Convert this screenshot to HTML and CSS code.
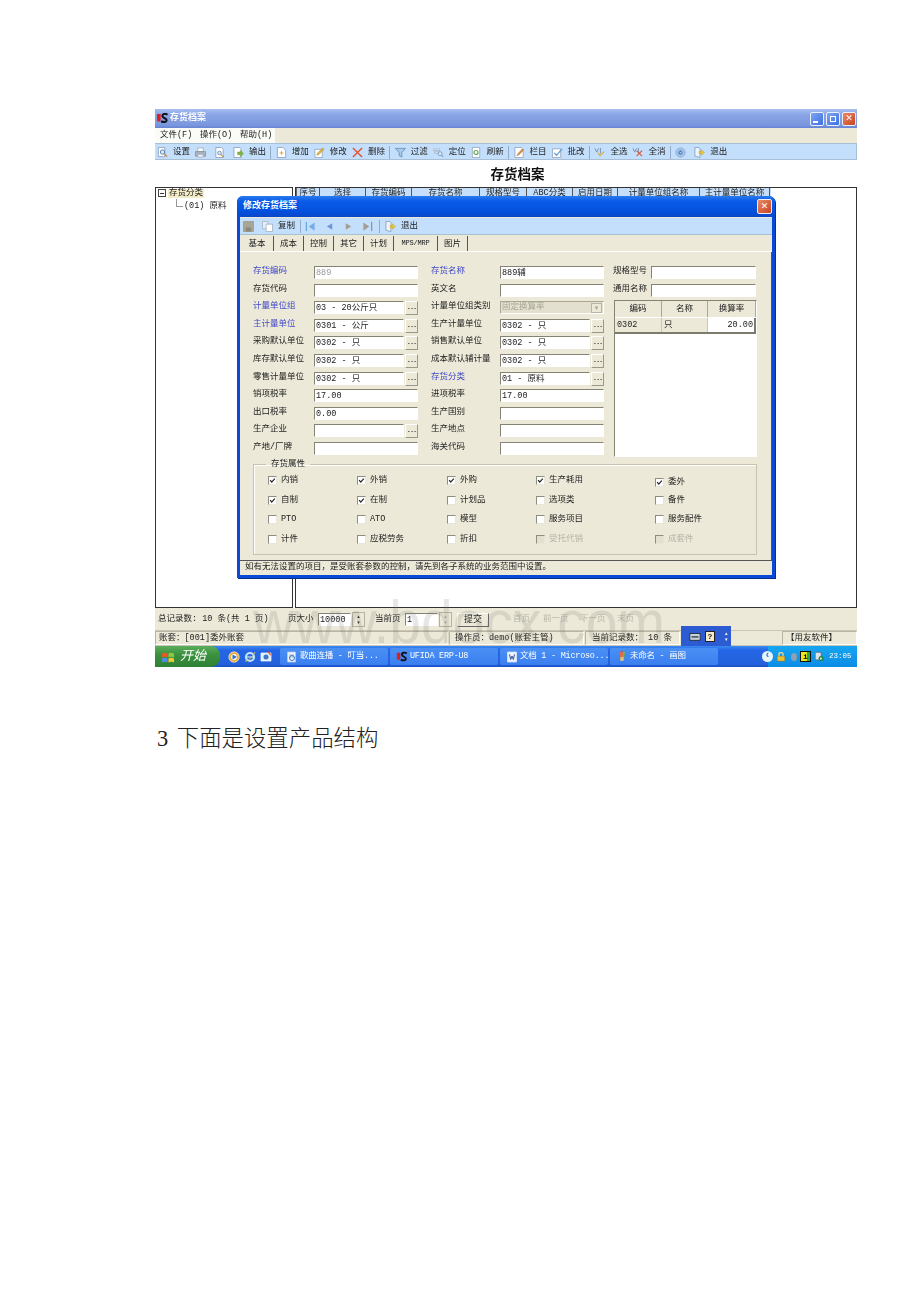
FILE: index.html
```html
<!DOCTYPE html>
<html lang="zh">
<head>
<meta charset="utf-8">
<title>存货档案</title>
<link rel="stylesheet" href="styles.css">
</head>
<body>
<svg class="defs" width="0" height="0">
  <symbol id="i-zoom" viewBox="0 0 12 12"><path d="M1.500.5h7v10h-7z" fill="#fff" stroke="#7d93b2" stroke-width=".8"/><circle cx="6" cy="5.500" r="2.400" fill="#cfe6fb" stroke="#5a7fa8"/><path d="M8 7.500l3 3" stroke="#c58a3a" stroke-width="1.400"/></symbol>
  <symbol id="i-print" viewBox="0 0 12 12"><path d="M3 1h6v4H3z" fill="#fff" stroke="#8a96a5" stroke-width=".7"/><path d="M.5 5h11v5H.5z" fill="#a9b4bf" stroke="#7a8692" stroke-width=".7"/><path d="M3 8h6v3H3z" fill="#eef2f6" stroke="#8a96a5" stroke-width=".6"/></symbol>
  <symbol id="i-prev" viewBox="0 0 12 12"><path d="M2 .5h6l2 2v9H2z" fill="#fff" stroke="#7d93b2" stroke-width=".8"/><circle cx="6" cy="6.500" r="2" fill="#cfe6fb" stroke="#5a7fa8" stroke-width=".8"/><path d="M7.500 8l3 3" stroke="#c58a3a" stroke-width="1.200"/></symbol>
  <symbol id="i-out" viewBox="0 0 12 12"><path d="M1 .5h6l2 2v9H1z" fill="#fff" stroke="#7d93b2" stroke-width=".8"/><path d="M5 5.500h3V3.500L11.500 7 8 10.500V8.500H5z" fill="#7fb548" stroke="#5d8d30" stroke-width=".4"/></symbol>
  <symbol id="i-add" viewBox="0 0 12 12"><path d="M1.500.5h6l3 3v8h-9z" fill="#fff" stroke="#7d93b2" stroke-width=".8"/><path d="M6 4.500v4M4 6.500h4" stroke="#e0a030"/></symbol>
  <symbol id="i-edit" viewBox="0 0 12 12"><path d="M1 2.500h8v9H1z" fill="#fff" stroke="#8a9ab0" stroke-width=".8"/><path d="M3 9l1-2.500L9.500 1 11 2.500 5.500 8z" fill="#e8b63c" stroke="#9a7a2a" stroke-width=".5"/></symbol>
  <symbol id="i-del" viewBox="0 0 12 12"><path d="M1 1l10 10M11 1L1 11" stroke="#e2512c" stroke-width="1.500"/></symbol>
  <symbol id="i-filter" viewBox="0 0 12 12"><path d="M.5 1.500h11L7.500 6v5l-3-1.500V6z" fill="#a9c9ea" stroke="#5f86b0" stroke-width=".8"/></symbol>
  <symbol id="i-loc" viewBox="0 0 14 12"><path d="M.5 1.500h8v2h-8zM2 5h6v2H2z" fill="#dfe7ef" stroke="#8c9cad" stroke-width=".6"/><circle cx="9" cy="7.500" r="2.500" fill="#d7ecfb" stroke="#6b8fb0"/><path d="M11 9.500l2 2" stroke="#7a93aa" stroke-width="1.300"/></symbol>
  <symbol id="i-ref" viewBox="0 0 12 12"><path d="M1.500.5h8v11h-8z" fill="#fff" stroke="#8a9ab0" stroke-width=".8"/><circle cx="5.500" cy="6" r="2.200" fill="none" stroke="#58a34a" stroke-width="1.200"/></symbol>
  <symbol id="i-col" viewBox="0 0 12 12"><path d="M1 .5h7l2 2v9H1z" fill="#fff" stroke="#8a9ab0" stroke-width=".8"/><path d="M3 9.500l1-2 5-5.500 1.500 1.500-5 5z" fill="#dc8f3c" stroke="#a2642a" stroke-width=".4"/></symbol>
  <symbol id="i-batch" viewBox="0 0 12 12"><path d="M.5 2h9v9.500h-9z" fill="#fff" stroke="#8a9ab0" stroke-width=".8"/><path d="M2.500 6.500l2.500 2.500 6-7" fill="none" stroke="#5ea0d8" stroke-width="1.300"/></symbol>
  <symbol id="i-all" viewBox="0 0 12 12"><path d="M1 1.500l2 4 2-4M7 1v6" stroke="#6a87a6" fill="none" stroke-width=".9"/><path d="M4 6l2.500 3.500L11 5" fill="none" stroke="#d6a93c" stroke-width="1.200"/></symbol>
  <symbol id="i-none" viewBox="0 0 12 12"><path d="M1 1.500l2 4 2-4M7 1v6" stroke="#6a87a6" fill="none" stroke-width=".9"/><path d="M5 4l6 6M11 4l-6 6" stroke="#dc5a3a" stroke-width="1.300"/></symbol>
  <symbol id="i-help" viewBox="0 0 12 12"><circle cx="6" cy="6" r="5" fill="#a9c7e8" stroke="#7fa2c9" stroke-width=".8"/><circle cx="6" cy="6" r="2.400" fill="#4d7fc0"/><path d="M5 5l1.200 1.800L7.500 5" stroke="#fff" fill="none" stroke-width=".7"/></symbol>
  <symbol id="i-exit" viewBox="0 0 12 12"><path d="M1 .5h4.500l1 1v10l-5.500-1.500z" fill="#eef4fb" stroke="#7d93b2" stroke-width=".8"/><path d="M5.500 5h2.500V3l3.500 3L8 9V7H5.500z" fill="#eec63a" stroke="#b08f20" stroke-width=".4"/></symbol>
  <symbol id="i-save" viewBox="0 0 12 12"><path d="M.5.500h11v11H.5z" fill="#a9a594" stroke="#8f8b7a" stroke-width=".6"/><path d="M3 7h6v4.500H3z" fill="#8d8977"/></symbol>
  <symbol id="i-copy" viewBox="0 0 12 12"><path d="M.5.500h6v8h-6z" fill="#e6edf5" stroke="#9ba9b8" stroke-width=".7"/><path d="M4.500 3.500h7v8h-7z" fill="#fff" stroke="#8ea0b2" stroke-width=".7"/></symbol>
  <symbol id="i-first" viewBox="0 0 12 12"><path d="M1.500 1v10" stroke="#6aa7de" stroke-width="1.400"/><path d="M10.500 1.500L4 6l6.500 4.500z" fill="#77aee4"/></symbol>
  <symbol id="i-back" viewBox="0 0 12 12"><path d="M9 2.500L3 6l6 3.500z" fill="#6f96d6"/></symbol>
  <symbol id="i-next" viewBox="0 0 12 12"><path d="M3 2.500L9 6l-6 3.500z" fill="#a29f92"/></symbol>
  <symbol id="i-last" viewBox="0 0 12 12"><path d="M10.500 1v10" stroke="#9a978a" stroke-width="1.400"/><path d="M1.500 1.500L8 6l-6.500 4.500z" fill="#a29f92"/></symbol>
  <symbol id="i-us" viewBox="0 0 14 12"><path d="M1 1v6.500c0 2.500 4 2.500 4 0V1z" fill="#d8201c"/><path d="M12.500 2C10 0 6.500 1 7 3.500c.5 2.500 4.500 2 4.500 4.500 0 2-3 2.500-6 1" fill="none" stroke="#101018" stroke-width="2.200"/></symbol>
  <symbol id="i-check" viewBox="0 0 9 9"><path d="M1.500 4L3.500 6.500 7.500 2" fill="none" stroke="#222" stroke-width="1.600"/></symbol>
  <symbol id="i-flag" viewBox="0 0 14 14"><path d="M1 3.500C3 2.500 4.500 2.500 6.500 3.500v4C4.500 6.500 3 6.500 1 7.500z" fill="#e8582c"/><path d="M7.500 3.500c2-1 3.500-1 5.500 0v4c-2-1-3.500-1-5.500 0z" fill="#8fc83c"/><path d="M1 8.500C3 7.500 4.500 7.500 6.500 8.500v4C4.500 11.500 3 11.500 1 12.500z" fill="#4c8ee8"/><path d="M7.500 8.500c2-1 3.500-1 5.500 0v4c-2-1-3.500-1-5.500 0z" fill="#f4c832"/></symbol>
  <symbol id="i-media" viewBox="0 0 12 12"><circle cx="6" cy="6" r="5.200" fill="#f4a92c" stroke="#fff" stroke-width=".6"/><circle cx="6" cy="6" r="3" fill="#fff"/><path d="M4.500 3.500L9 6l-4.500 2.500z" fill="#2c6fc4"/></symbol>
  <symbol id="i-ie" viewBox="0 0 12 12"><circle cx="6" cy="6" r="4" fill="none" stroke="#bfe3fb" stroke-width="2.200"/><path d="M3 6h6" stroke="#bfe3fb" stroke-width="1.200"/><path d="M1 10C3 11 9 6 11 1" fill="none" stroke="#e8c858" stroke-width=".9"/></symbol>
  <symbol id="i-desk" viewBox="0 0 12 12"><path d="M1 2h10v8H1z" fill="#dfeefc" stroke="#fff" stroke-width=".7"/><circle cx="6" cy="6" r="2.500" fill="#3a78c8"/><path d="M8 1l3 3" stroke="#e05a30" stroke-width="1.200"/></symbol>
  <symbol id="i-word" viewBox="0 0 12 12"><path d="M1.500 1h9v10h-9z" fill="#e9f0fa" stroke="#dfe9f8" stroke-width=".7"/><path d="M3.500 3.500l1.200 5 1.300-3.500 1.300 3.500 1.200-5" fill="none" stroke="#34589c"/></symbol>
  <symbol id="i-paint" viewBox="0 0 12 12"><path d="M3 1l1.500 9h3L9 1z" fill="#d8c07a"/><path d="M4 .5v6M6 0v6" stroke="#d83a2c" stroke-width="1.200"/><path d="M8 .5v6" stroke="#3aa84a" stroke-width="1.200"/></symbol>
  <symbol id="i-page" viewBox="0 0 12 12"><path d="M1.500 1h8v10h-8z" fill="#eef4fb" stroke="#b7cce8" stroke-width=".7"/><path d="M3 4h5M3 6h5" stroke="#88a3c8" stroke-width=".8"/><circle cx="6" cy="7" r="2.500" fill="none" stroke="#3a78c8"/></symbol>
  <symbol id="i-kb" viewBox="0 0 14 12"><path d="M1 2.500h12v8H1z" fill="#c9d3dd" stroke="#20262c"/><path d="M3 6.500h8" stroke="#20262c" stroke-width="1.400"/></symbol>
  <symbol id="i-lock" viewBox="0 0 12 12"><path d="M1.500 5.500h9v6h-9z" fill="#f0c030" stroke="#9a6c10" stroke-width=".5"/><path d="M3.500 5.500V3.200C3.500 .600 8.500 .600 8.500 3.200v2.300" fill="none" stroke="#f4e08a" stroke-width="1.400"/></symbol>
  <symbol id="i-srv" viewBox="0 0 12 12"><path d="M1.500 1h7v9h-7z" fill="#dfe4ea" stroke="#5b6570" stroke-width=".8"/><circle cx="8.500" cy="8.500" r="3" fill="#1f8a3c"/><path d="M7.500 6.800l2.500 1.700-2.500 1.700z" fill="#fff"/></symbol>
</svg>

<main class="page">
  <section class="shot">
    <header class="win-title">
      <svg class="us"><use href="#i-us"/></svg>
      <span class="win-name">存货档案</span>
      <span class="ctrls">
        <span class="ctrl ctrl-blue"><i class="min"></i></span>
        <span class="ctrl ctrl-blue"><i class="rest"></i></span>
        <span class="ctrl ctrl-red">✕</span>
      </span>
    </header>
    <nav class="menu">
      <span class="menu-items"><span>文件(F)</span><span>操作(O)</span><span>帮助(H)</span></span>
    </nav>
    <div class="toolbar">
      <span class="tb"><svg class="ic"><use href="#i-zoom"/></svg>设置</span>
      <span class="tb tb-icon"><svg class="ic"><use href="#i-print"/></svg></span>
      <span class="tb tb-icon"><svg class="ic"><use href="#i-prev"/></svg></span>
      <span class="tb"><svg class="ic"><use href="#i-out"/></svg>输出</span>
      <i class="sep"></i>
      <span class="tb"><svg class="ic"><use href="#i-add"/></svg>增加</span>
      <span class="tb"><svg class="ic"><use href="#i-edit"/></svg>修改</span>
      <span class="tb"><svg class="ic"><use href="#i-del"/></svg>删除</span>
      <i class="sep"></i>
      <span class="tb"><svg class="ic"><use href="#i-filter"/></svg>过滤</span>
      <span class="tb"><svg class="ic"><use href="#i-loc"/></svg>定位</span>
      <span class="tb"><svg class="ic"><use href="#i-ref"/></svg>刷新</span>
      <i class="sep"></i>
      <span class="tb"><svg class="ic"><use href="#i-col"/></svg>栏目</span>
      <span class="tb"><svg class="ic"><use href="#i-batch"/></svg>批改</span>
      <i class="sep"></i>
      <span class="tb"><svg class="ic"><use href="#i-all"/></svg>全选</span>
      <span class="tb"><svg class="ic"><use href="#i-none"/></svg>全消</span>
      <i class="sep"></i>
      <span class="tb tb-icon"><svg class="ic"><use href="#i-help"/></svg></span>
      <span class="tb"><svg class="ic"><use href="#i-exit"/></svg>退出</span>
    </div>
    <h2 class="sheet-title">存货档案</h2>
    <div class="body">
      <aside class="tree">
        <div class="tree-root"><i class="tree-box"></i><span class="tree-sel">存货分类</span></div>
        <div class="tree-leaf">(01) 原料</div>
      </aside>
      <div class="grid-wrap">
        <div class="grid-head">
          <span class="c1">序号</span><span class="c2">选择</span><span class="c3">存货编码</span><span class="c4">存货名称</span><span class="c5">规格型号</span><span class="c6">ABC分类</span><span class="c7">启用日期</span><span class="c8">计量单位组名称</span><span class="c9">主计量单位名称</span>
        </div>
      </div>
    </div>
    <div class="pager">
      <span class="total">总记录数: 10 条(共 1 页)</span>
      <span class="psize">页大小</span>
      <span class="field pnum">10000</span><span class="spin"><i>▴</i><i>▾</i></span>
      <span class="pcur">当前页</span>
      <span class="field pnum">1</span><span class="spin spin-off"><i>▴</i><i>▾</i></span>
      <span class="submit">提交</span>
      <span class="plink first">首页</span><span class="plink">前一页</span><span class="plink">下一页</span><span class="plink">末页</span>
    </div>
    <div class="status">
      <span class="pane p1">账套：[001]委外账套</span>
      <span class="pane p2">操作员：demo(账套主管)</span>
      <span class="pane p3">当前记录数： 10 条</span>
      <span class="pane p4"></span>
      <span class="pane p5">【用友软件】</span>
    </div>
    <footer class="taskbar">
      <span class="start"><svg class="flag"><use href="#i-flag"/></svg>开始</span>
      <span class="quick"><svg class="ic-q"><use href="#i-media"/></svg><svg class="ic-q"><use href="#i-ie"/></svg><svg class="ic-q"><use href="#i-desk"/></svg></span>
      <span class="task"><svg class="ic-q"><use href="#i-page"/></svg>歌曲连播 - 叮当...</span>
      <span class="task"><svg class="ic-q"><use href="#i-us"/></svg>UFIDA ERP-U8</span>
      <span class="task"><svg class="ic-q"><use href="#i-word"/></svg>文档 1 - Microso...</span>
      <span class="task"><svg class="ic-q"><use href="#i-paint"/></svg>未命名 - 画图</span>
      <span class="tray">
        <i class="tray-arrow">‹</i>
        <svg class="ic-t"><use href="#i-lock"/></svg>
        <i class="tray-ear"></i>
        <i class="tray-info">i</i>
        <svg class="ic-t"><use href="#i-srv"/></svg>
        <span class="clock">23:05</span>
      </span>
    </footer>

    <div class="langbar">
      <svg class="lang-kb"><use href="#i-kb"/></svg>
      <i class="lang-help">?</i>
      <span class="lang-spin"><i>▴</i><i>▾</i></span>
    </div>

    <div class="dialog">
      <div class="dlg-title"><span>修改存货档案</span><span class="ctrl ctrl-red dlg-close">✕</span></div>
      <div class="dlg-tools">
        <svg class="ic ic-save"><use href="#i-save"/></svg>
        <span class="tb"><svg class="ic"><use href="#i-copy"/></svg>复制</span>
        <i class="sep sep-tight"></i>
        <svg class="ic nav"><use href="#i-first"/></svg>
        <svg class="ic nav"><use href="#i-back"/></svg>
        <svg class="ic nav"><use href="#i-next"/></svg>
        <svg class="ic nav"><use href="#i-last"/></svg>
        <i class="sep"></i>
        <span class="tb"><svg class="ic"><use href="#i-exit"/></svg>退出</span>
      </div>
      <div class="tabs">
        <span class="tab tab-on">基本</span><span class="tab">成本</span><span class="tab">控制</span><span class="tab">其它</span><span class="tab">计划</span><span class="tab tab-mono">MPS/MRP</span><span class="tab">图片</span>
      </div>
      <div class="panel">
        <div class="form">
          <div class="fcol fcol-a">
            <div class="row"><span class="lab req">存货编码</span><span class="field off">889</span></div>
            <div class="row"><span class="lab">存货代码</span><span class="field"></span></div>
            <div class="row"><span class="lab req">计量单位组</span><span class="field short">03 - 20公斤只</span><b class="dots">...</b></div>
            <div class="row"><span class="lab req">主计量单位</span><span class="field short">0301 - 公斤</span><b class="dots">...</b></div>
            <div class="row"><span class="lab">采购默认单位</span><span class="field short">0302 - 只</span><b class="dots">...</b></div>
            <div class="row"><span class="lab">库存默认单位</span><span class="field short">0302 - 只</span><b class="dots">...</b></div>
            <div class="row"><span class="lab">零售计量单位</span><span class="field short">0302 - 只</span><b class="dots">...</b></div>
            <div class="row"><span class="lab">销项税率</span><span class="field">17.00</span></div>
            <div class="row"><span class="lab">出口税率</span><span class="field">0.00</span></div>
            <div class="row"><span class="lab">生产企业</span><span class="field short"></span><b class="dots">...</b></div>
            <div class="row"><span class="lab">产地/厂牌</span><span class="field"></span></div>
          </div>
          <div class="fcol fcol-b">
            <div class="row"><span class="lab req">存货名称</span><span class="field">889辅</span></div>
            <div class="row"><span class="lab">英文名</span><span class="field"></span></div>
            <div class="row"><span class="lab">计量单位组类别</span><span class="combo">固定换算率<i>▾</i></span></div>
            <div class="row"><span class="lab">生产计量单位</span><span class="field short">0302 - 只</span><b class="dots">...</b></div>
            <div class="row"><span class="lab">销售默认单位</span><span class="field short">0302 - 只</span><b class="dots">...</b></div>
            <div class="row"><span class="lab">成本默认辅计量</span><span class="field short">0302 - 只</span><b class="dots">...</b></div>
            <div class="row"><span class="lab req">存货分类</span><span class="field short">01 - 原料</span><b class="dots">...</b></div>
            <div class="row"><span class="lab">进项税率</span><span class="field">17.00</span></div>
            <div class="row"><span class="lab">生产国别</span><span class="field"></span></div>
            <div class="row"><span class="lab">生产地点</span><span class="field"></span></div>
            <div class="row"><span class="lab">海关代码</span><span class="field"></span></div>
          </div>
          <div class="fcol fcol-c">
            <div class="row"><span class="lab">规格型号</span><span class="field"></span></div>
            <div class="row"><span class="lab">通用名称</span><span class="field"></span></div>
            <div class="conv">
              <div class="conv-head"><span>编码</span><span>名称</span><span>换算率</span></div>
              <div class="conv-row"><span>0302</span><span>只</span><span class="conv-rate">20.00</span></div>
            </div>
          </div>
        </div>
        <fieldset class="attrs">
          <legend>存货属性</legend>
          <div class="checks">
            <span class="ck"><i class="box"><svg><use href="#i-check"/></svg></i>内销</span>
            <span class="ck"><i class="box"><svg><use href="#i-check"/></svg></i>外销</span>
            <span class="ck"><i class="box"><svg><use href="#i-check"/></svg></i>外购</span>
            <span class="ck"><i class="box"><svg><use href="#i-check"/></svg></i>生产耗用</span>
            <span class="ck ck-low"><i class="box"><svg><use href="#i-check"/></svg></i>委外</span>
            <span class="ck"><i class="box"><svg><use href="#i-check"/></svg></i>自制</span>
            <span class="ck"><i class="box"><svg><use href="#i-check"/></svg></i>在制</span>
            <span class="ck"><i class="box"></i>计划品</span>
            <span class="ck"><i class="box"></i>选项类</span>
            <span class="ck"><i class="box"></i>备件</span>
            <span class="ck"><i class="box"></i>PTO</span>
            <span class="ck"><i class="box"></i>ATO</span>
            <span class="ck"><i class="box"></i>模型</span>
            <span class="ck"><i class="box"></i>服务项目</span>
            <span class="ck"><i class="box"></i>服务配件</span>
            <span class="ck"><i class="box"></i>计件</span>
            <span class="ck"><i class="box"></i>应税劳务</span>
            <span class="ck"><i class="box"></i>折扣</span>
            <span class="ck ck-off"><i class="box"></i>受托代销</span>
            <span class="ck ck-off"><i class="box"></i>成套件</span>
          </div>
        </fieldset>
      </div>
      <div class="dlg-note">如有无法设置的项目，是受账套参数的控制，请先到各子系统的业务范围中设置。</div>
    </div>
    <div class="watermark">www.bdocx.com</div>
  </section>
  <p class="heading">3 下面是设置产品结构</p>
</main>
</body>
</html>
```
FILE: styles.css
```css
* { box-sizing: border-box; }
html, body { margin: 0; background: #fff; }
.defs { position: absolute; }
i { font-style: normal; }

.page { height: 1302px; overflow: hidden; padding: 109px 0 0 155px; }
.shot { position: relative; width: 702px; height: 558px; font-family: "Liberation Mono", "Noto Sans CJK SC", monospace; font-size: 8.500px; line-height: 1; color: #222; }
.shot > :not(.watermark) { filter: blur(.4px); }

/* main window */
.win-title { height: 19px; display: flex; align-items: center; padding: 0 1px; color: #fff; background: linear-gradient(#a6bdf0, #89a5e6 30%, #7a97de 85%, #6583d2); }
.us { width: 13px; height: 11px; margin-right: 1px; }
.win-name { font-weight: 700; font-size: 9px; }
.ctrls { margin-left: auto; display: flex; gap: 2px; }
.ctrl { width: 14px; height: 14px; border: 1px solid #e8eefb; border-radius: 2px; display: flex; align-items: center; justify-content: center; color: #fff; font-size: 9px; font-weight: 700; font-family: "DejaVu Sans", sans-serif; }
.ctrl-blue { background: linear-gradient(135deg, #7ea6f2, #3e6fe0); }
.ctrl-red { background: linear-gradient(135deg, #e98a6a, #c8431f); }
.min { width: 5px; height: 2px; background: #fff; margin: 6px 4px 0 0; }
.rest { width: 6px; height: 6px; border: 1px solid #fff; }

.menu { height: 15px; background: #ece9d8; }
.menu-items { width: 120px; height: 15px; display: flex; align-items: center; padding-left: 5px; background: #fbfbf8; }
.menu-items span { width: 40px; flex: none; white-space: nowrap; }

.toolbar { height: 17px; display: flex; align-items: center; gap: 5px; padding: 1px 0 0 2px; background: #c3dffb; border: solid #a9bfd6; border-width: 1px 1px 1px 0; }
.tb { display: flex; align-items: center; gap: 5px; white-space: nowrap; }
.tb-icon { margin-right: 3px; }
.ic { width: 11px; height: 11px; flex: none; }
.sep { width: 1px; height: 13px; background: #93abc6; flex: none; }
.toolbar .sep { margin: 0 -.6px; }

.sheet-title { height: 27px; margin: 0; padding-left: 23px; font-size: 13.500px; font-weight: 700; line-height: 32px; text-align: center; color: #111; }

.body { height: 421px; display: flex; gap: 2px; background: #fff; }
.tree { width: 138px; border: 1px solid #333; padding: 1px 2px; }
.tree-root { display: flex; align-items: center; gap: 2px; }
.tree-box { width: 8px; height: 8px; border: 1px solid #444; flex: none; position: relative; }
.tree-box::after { content: ""; position: absolute; left: 1px; right: 1px; top: 2.500px; height: 1px; background: #333; }
.tree-sel { background: #f4ecc8; padding: 0 1px; }
.tree-leaf { margin: 4px 0 0 26px; position: relative; white-space: nowrap; }
.tree-leaf::before { content: ""; position: absolute; left: -8px; top: -3px; width: 6px; height: 7px; border: solid #999; border-width: 0 0 1px 1px; }
.grid-wrap { flex: 1; border: 1px solid #333; }
.grid-head { width: 475px; height: 11px; display: flex; background: #c5dffb; border-left: 1px solid #666; }
.grid-head span { flex: none; text-align: center; border-right: 1px solid #555; line-height: 11px; white-space: nowrap; overflow: hidden; }
.c1 { width: 23px; } .c2 { width: 46px; } .c3 { width: 46px; } .c4 { width: 68px; } .c5 { width: 47px; }
.c6 { width: 46px; } .c7 { width: 45px; } .c8 { width: 82px; } .c9 { width: 70px; }

.pager { height: 23px; display: flex; align-items: center; background: #ece9d8; padding: 1px 0 0 3px; border-bottom: 1px solid #c9c6b4; white-space: nowrap; }
.total { width: 130px; flex: none; }
.psize { width: 30px; flex: none; }
.pcur { width: 30px; flex: none; }
.pnum { width: 33px; height: 15px; flex: none; }
.spin { width: 13px; height: 15px; display: flex; flex-direction: column; background: #ece9d8; border: 1px solid #b5b2a2; font-size: 5px; line-height: 6px; text-align: center; margin: 0 10px 0 1px; flex: none; font-family: "DejaVu Sans", sans-serif; }
.spin-off { color: #aaa; margin-right: 5px; }
.submit { width: 32px; height: 14px; background: #ece9d8; border: 1px solid; border-color: #fff #666 #666 #fff; text-align: center; line-height: 13px; font-size: 9px; flex: none; }
.plink { color: #b8b6a8; width: 37px; flex: none; }
.first { margin-left: 24px; width: 30px; }

.status { height: 15px; display: flex; gap: 1px; background: #ece9d8; border-bottom: 1px solid #c9c6b4; }
.pane { border: 1px solid; border-color: #b8b5a4 #fff #fff #b8b5a4; padding: 2px 3px 0; white-space: nowrap; flex: none; }
.p1 { width: 293px; } .p2 { width: 135px; padding-left: 5px; } .p3 { width: 95px; padding-left: 6px; } .p4 { width: 100px; border-color: transparent; } .p5 { flex: 1; padding-left: 3px; }

.taskbar { height: 21px; display: flex; align-items: center; color: #fff; background: linear-gradient(#3a8af2, #2566e6 20%, #2462dc 85%, #1b4fc4); }
.start { width: 65px; height: 21px; display: flex; align-items: center; gap: 5px; padding-left: 6px; font-size: 13px; font-style: italic; background: linear-gradient(#5cae5c, #3b913e 40%, #2f8034); border-radius: 0 9px 9px 0; flex: none; }
.flag { width: 14px; height: 14px; }
.quick { width: 60px; display: flex; gap: 4px; padding-left: 8px; flex: none; }
.ic-q { width: 12px; height: 12px; flex: none; }
.task { width: 108px; height: 17px; margin-right: 2px; display: flex; align-items: center; gap: 2px; padding-left: 6px; background: linear-gradient(#4a90f4, #3a7ff0); border-radius: 2px; white-space: nowrap; overflow: hidden; flex: none; letter-spacing: -.25px; }
.tray { margin-left: auto; width: 89px; height: 21px; display: flex; align-items: center; gap: 3px; background: linear-gradient(#16a6f0, #0d8ce6); flex: none; }
.tray-arrow { width: 11px; height: 11px; margin-left: -6px; border-radius: 50%; background: #e8f4fd; color: #2a6fd6; text-align: center; font-weight: 700; font-size: 10px; line-height: 9px; flex: none; }
.ic-t { width: 10px; height: 11px; flex: none; }
.tray-ear { width: 6px; height: 8px; margin-left: 2px; border-radius: 50%; background: #8ea0b2; flex: none; }
.tray-info { width: 11px; height: 11px; background: linear-gradient(90deg, #e8e81c 70%, #2aa84a 70%); border: 1px solid #111; color: #111; font-size: 8px; text-align: center; line-height: 9px; font-weight: 700; flex: none; }
.clock { margin-left: 2px; white-space: nowrap; font-size: 7.500px; }

.langbar { position: absolute; left: 526px; top: 517px; width: 50px; height: 20px; background: #2d5cd2; display: flex; align-items: center; gap: 4px; padding-left: 8px; }
.lang-kb { width: 12px; height: 11px; }
.lang-help { width: 10px; height: 11px; background: #f4eccc; border: 1px solid #222; color: #222; font-weight: 700; font-size: 8px; text-align: center; line-height: 9px; }
.lang-spin { margin-left: 6px; color: #fff; font-size: 5px; line-height: 6px; display: flex; flex-direction: column; font-family: "DejaVu Sans", sans-serif; }

/* dialog */
.dialog { position: absolute; left: 82px; top: 87px; width: 538px; height: 382px; display: flex; flex-direction: column; background: #ece9d8; border: 3px solid #0a49d6; border-top: 0; border-radius: 6px 6px 0 0; box-shadow: 1px 1px 0 #08308f; }
.dlg-title { height: 21px; flex: none; margin: 0 -3px; padding: 0 3px 0 6px; display: flex; align-items: center; justify-content: space-between; color: #fff; font-weight: 700; font-size: 9px; background: linear-gradient(#2a7af0, #0a5ae8 25%, #0450dc 75%, #0a46c8); border-radius: 6px 6px 0 0; }
.dlg-close { width: 15px; height: 15px; }
.dlg-tools { height: 17px; flex: none; display: flex; align-items: center; gap: 5px; padding-left: 3px; margin-top: 1px; background: #c3dffb; border-bottom: 1px solid #a9bfd6; }
.ic-save { margin-right: 3px; }
.nav { margin: 0 1.500px; }
.sep-tight { margin-right: -3px; }
.tabs { height: 17px; flex: none; display: flex; align-items: flex-end; padding-left: 7px; border-bottom: 1px solid #fff; }
.tab { height: 15px; padding-top: 4px; width: 30px; text-align: center; border-right: 1px solid #555; flex: none; }
.tab-on { width: 27px; padding-right: 6px; }
.tab-mono { width: 44px; font-size: 7px; letter-spacing: -.2px; white-space: nowrap; }
.panel { flex: 1; min-height: 0; padding: 14px 0 0 13px; border-right: 1px solid #555; border-bottom: 1px solid #555; }

.form { display: flex; height: 194px; }
.fcol-a { width: 178px; flex: none; }
.fcol-b { width: 182px; flex: none; }
.fcol-c { width: 143px; flex: none; }
.row { height: 17.600px; display: flex; align-items: flex-start; white-space: nowrap; }
.lab { padding-top: 1px; flex: none; }
.fcol-a .lab { width: 61px; }
.fcol-b .lab { width: 69px; }
.fcol-c .lab { width: 38px; }
.req { color: #4048c8; }
.field { display: block; height: 13px; background: #fff; border: 1px solid; border-color: #858372 #fff #fff #858372; padding: 2px 1px 0; white-space: nowrap; overflow: hidden; }
.off { color: #999; }
.row .field, .combo { width: 104px; flex: none; }
.fcol-c .row .field { width: 105px; }
.row .short { width: 90px; }
.dots { width: 13px; height: 14px; margin-left: 1px; flex: none; background: #ece9d8; border: 1px solid; border-color: #fff #9a9888 #9a9888 #fff; font-size: 7px; letter-spacing: -1px; text-align: center; line-height: 10px; overflow: hidden; }
.combo { height: 13px; display: flex; justify-content: space-between; align-items: center; background: #e3e0cf; border: 1px solid; border-color: #a9a794 #fff #fff #a9a794; padding: 0 1px; color: #a9a794; }
.combo i { width: 11px; height: 10px; background: #ece9d8; border: 1px solid #b8b5a4; text-align: center; line-height: 8px; font-size: 7px; font-family: "DejaVu Sans", sans-serif; }
.conv { height: 157px; width: 143px; margin: -1px 0 0 1px; background: #fff; border: 1px solid; border-color: #858372 #fff #fff #858372; }
.conv-head, .conv-row { display: grid; grid-template-columns: 47px 46px 1fr; }
.conv-head { height: 17px; background: #ece9d8; border-bottom: 1px solid #fff; text-align: center; line-height: 16px; }
.conv-head span { border-right: 1px solid #aaa79a; }
.conv-row { height: 16px; background: #ece9d8; border-bottom: 2px solid #7d7b6c; line-height: 14px; }
.conv-row span { border-right: 1px solid #c9c6b4; padding-left: 2px; }
.conv-rate { background: #fff; text-align: right; padding-right: 1px; border-right: 2px solid #7d7b6c !important; }

.attrs { width: 504px; height: 95px; margin: 0; padding: 6px 0 0 14px; border: 1px solid #c6c3b2; box-shadow: inset 1px 1px 0 #fff; }
.attrs legend { margin-left: -2px; padding: 0 5px; }
.checks { display: grid; grid-template-columns: 89px 90px 89px 119px 1fr; grid-auto-rows: 19.500px; }
.ck { display: flex; align-items: center; gap: 4px; height: 12px; white-space: nowrap; }
.ck-low { margin-top: 2px; }
.ck-off { color: #b5b3a6; }
.ck-off .box { background: #e3e0cf; }
.box { width: 9px; height: 9px; background: #fff; border: 1px solid; border-color: #8f8d7d #e8e6da #e8e6da #8f8d7d; flex: none; display: flex; }
.box svg { width: 7px; height: 7px; }

.dlg-note { height: 14px; flex: none; padding: 2px 0 0 5px; background: #ece9d8; white-space: nowrap; }

.watermark { position: absolute; left: 98px; top: 482px; font: 400 62px/1 "Liberation Sans", sans-serif; color: rgba(110, 110, 110, .17); transform: scaleX(.92); transform-origin: left; white-space: nowrap; pointer-events: none; }

.heading { margin: 59px 0 0 2px; font-family: "Liberation Serif", "Noto Sans CJK SC", serif; font-size: 22.400px; line-height: 26px; color: #222; font-weight: 300; word-spacing: 3px; }
```
